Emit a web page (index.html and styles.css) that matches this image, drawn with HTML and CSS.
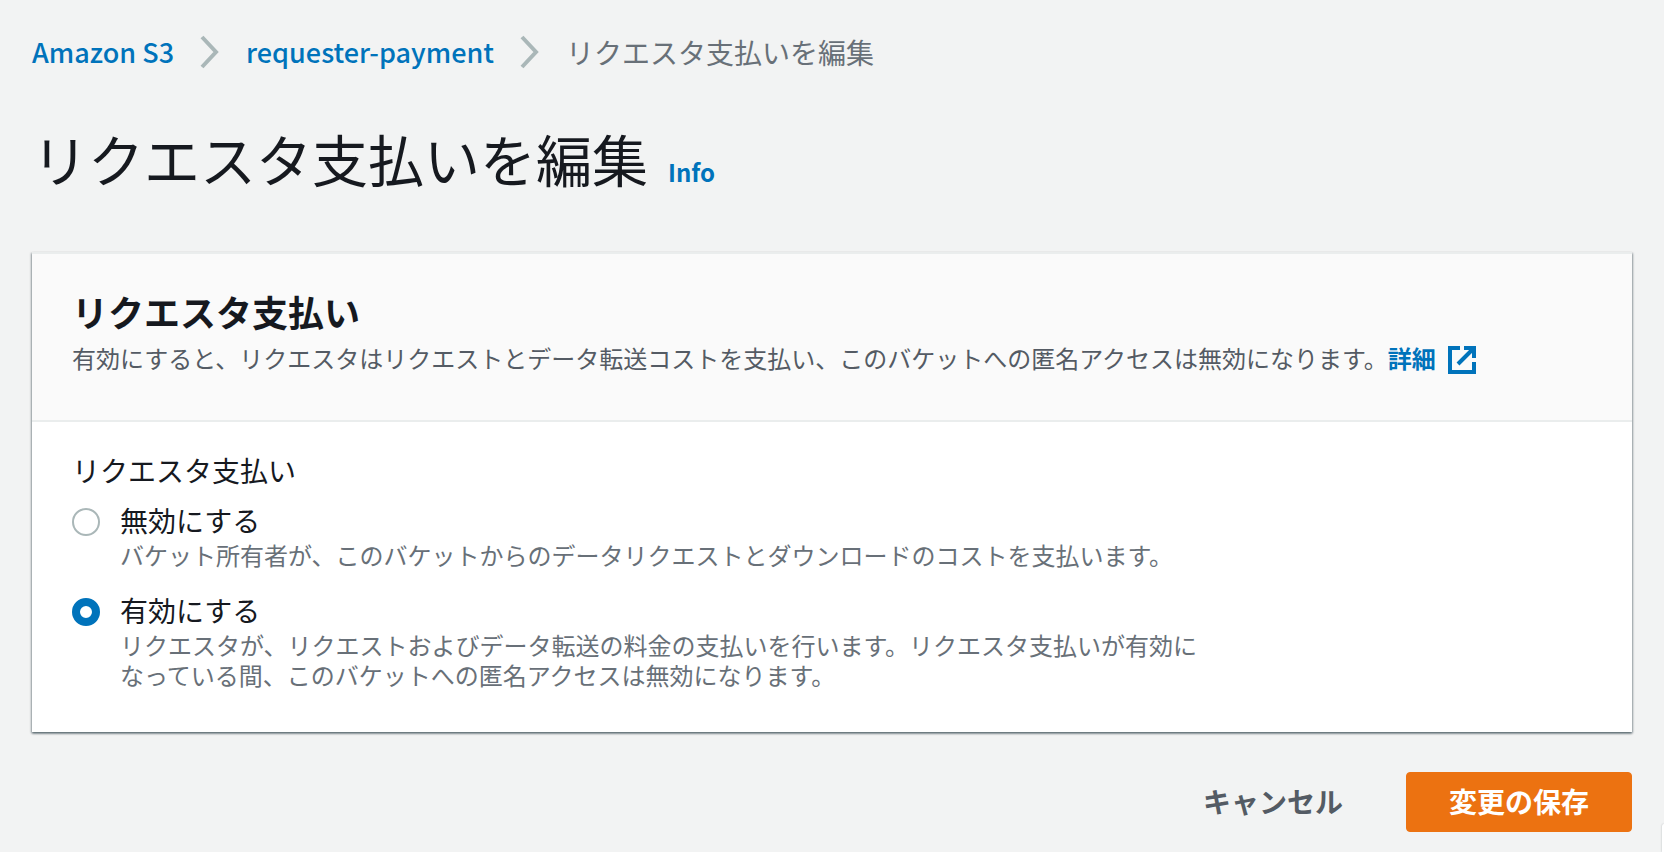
FILE: index.html
```html
<!DOCTYPE html>
<html lang="ja">
<head>
    <meta charset="UTF-8">
    <title>リクエスタ支払いを編集</title>
    <meta name="viewport" content="width=device-width, initial-scale=1">
    <link rel="stylesheet" href="styles.css">
</head>
<body>
    <main class="page">
        <nav class="breadcrumbs">
            <a href="#">Amazon S3</a>
            <svg class="chevron" viewBox="0 0 20 34" aria-hidden="true"><path d="M2 2l14 15-14 15"/></svg>
            <a href="#">requester-payment</a>
            <svg class="chevron" viewBox="0 0 20 34" aria-hidden="true"><path d="M2 2l14 15-14 15"/></svg>
            <span class="current">リクエスタ支払いを編集</span>
        </nav>
        <header class="page-header">
            <h1>リクエスタ支払いを編集</h1>
            <a class="info" href="#">Info</a>
        </header>
        <form>
            <section class="card">
                <header class="card-header">
                    <h2>リクエスタ支払い</h2>
                    <p>有効にすると、リクエスタはリクエストとデータ転送コストを支払い、このバケットへの匿名アクセスは無効になります。<a class="external" href="#">詳細<svg viewBox="0 0 28 28" aria-hidden="true"><path d="M12 2H2v24h24V16M16 2h10v10M26 2L10 18"/></svg></a></p>
                </header>
                <fieldset class="card-body">
                    <legend>リクエスタ支払い</legend>
                    <div class="option">
                        <input id="disable" type="radio" name="payer" aria-describedby="disable-desc">
                        <label for="disable">無効にする</label>
                        <p id="disable-desc">バケット所有者が、このバケットからのデータリクエストとダウンロードのコストを支払います。</p>
                    </div>
                    <div class="option">
                        <input id="enable" type="radio" name="payer" aria-describedby="enable-desc" checked>
                        <label for="enable">有効にする</label>
                        <p id="enable-desc">リクエスタが、リクエストおよびデータ転送の料金の支払いを行います。リクエスタ支払いが有効になっている間、このバケットへの匿名アクセスは無効になります。</p>
                    </div>
                </fieldset>
            </section>
            <div class="actions">
                <button class="btn" type="button">キャンセル</button>
                <button class="btn btn-primary" type="submit">変更の保存</button>
            </div>
        </form>
    </main>
    <aside class="drawer-edge"></aside>
</body>
</html>
```
FILE: styles.css
```css
* {
    box-sizing: border-box;
}
body {
    margin: 0;
    background: #f2f3f3;
    color: #16191f;
}
body, button {
    font-family: "Noto Sans CJK JP", sans-serif;
    font-size: 28px;
    line-height: 40px;
}
h1, h2, p {
    margin: 0;
}
a {
    color: #0073bb;
    text-decoration: none;
}
.page {
    padding: 32px 32px 20px;
}
.breadcrumbs {
    display: flex;
    align-items: center;
}
.breadcrumbs a {
    font-size: 27px;
    font-weight: 500;
}
.chevron {
    width: 20px;
    height: 34px;
    margin: 0 26px;
    fill: none;
    stroke: #aab7b8;
    stroke-width: 4;
}
.current {
    color: #687078;
}
.page-header {
    display: flex;
    align-items: baseline;
    gap: 20px;
    margin: 50px 0 58px;
}
h1 {
    font-size: 56px;
    font-weight: 400;
    line-height: 72px;
}
.info {
    font-size: 24px;
    font-weight: 700;
}
.card {
    background: white;
    border-top: 2px solid #eaeded;
    box-shadow: 0 2px 2px 0 rgba(0, 28, 36, 0.3), 1px 1px 2px 0 rgba(0, 28, 36, 0.3), -1px 1px 2px 0 rgba(0, 28, 36, 0.3);
}
.card-header {
    padding: 36px 40px 42px;
    background: #fafafa;
    border-bottom: 2px solid #eaeded;
}
h2 {
    font-size: 36px;
    font-weight: 700;
    line-height: 42px;
}
.card-header p {
    margin-top: 6px;
    color: #545b64;
    font-size: 24px;
}
.external {
    font-weight: 700;
}
.external svg {
    width: 28px;
    height: 28px;
    margin-left: 12px;
    vertical-align: -6px;
    fill: none;
    stroke: currentColor;
    stroke-width: 4;
}
.card-body {
    margin: 0;
    padding: 28px 40px 42px;
    border: 0;
}
legend {
    float: left;
    width: 100%;
    margin-bottom: 10px;
    padding: 0;
}
.option {
    display: grid;
    clear: both;
    grid-template-columns: 28px minmax(0, 1100px);
    column-gap: 20px;
}
.option + .option {
    margin-top: 20px;
}
.option input {
    appearance: none;
    width: 28px;
    height: 28px;
    margin: 8px 0 0;
    background: white;
    border: 2px solid #aab7b8;
    border-radius: 50%;
}
.option input:checked {
    border: 8px solid #0073bb;
}
.option p {
    grid-column: 2;
    color: #687078;
    font-size: 24px;
    line-height: 30px;
}
.actions {
    display: flex;
    justify-content: flex-end;
    gap: 20px;
    margin-top: 40px;
}
.btn {
    padding: 8px 42px 10px;
    background: transparent;
    border: 1px solid transparent;
    border-radius: 4px;
    color: #545b64;
    font-weight: 700;
    cursor: pointer;
}
.btn-primary {
    background: #ec7211;
    border-color: #ec7211;
    color: white;
}
.drawer-edge {
    position: fixed;
    right: 0;
    bottom: 0;
    width: 2px;
    height: 28px;
    background: white;
    border-top-left-radius: 2px;
    box-shadow: 0 0 2px rgba(0, 28, 36, 0.3);
}
```
